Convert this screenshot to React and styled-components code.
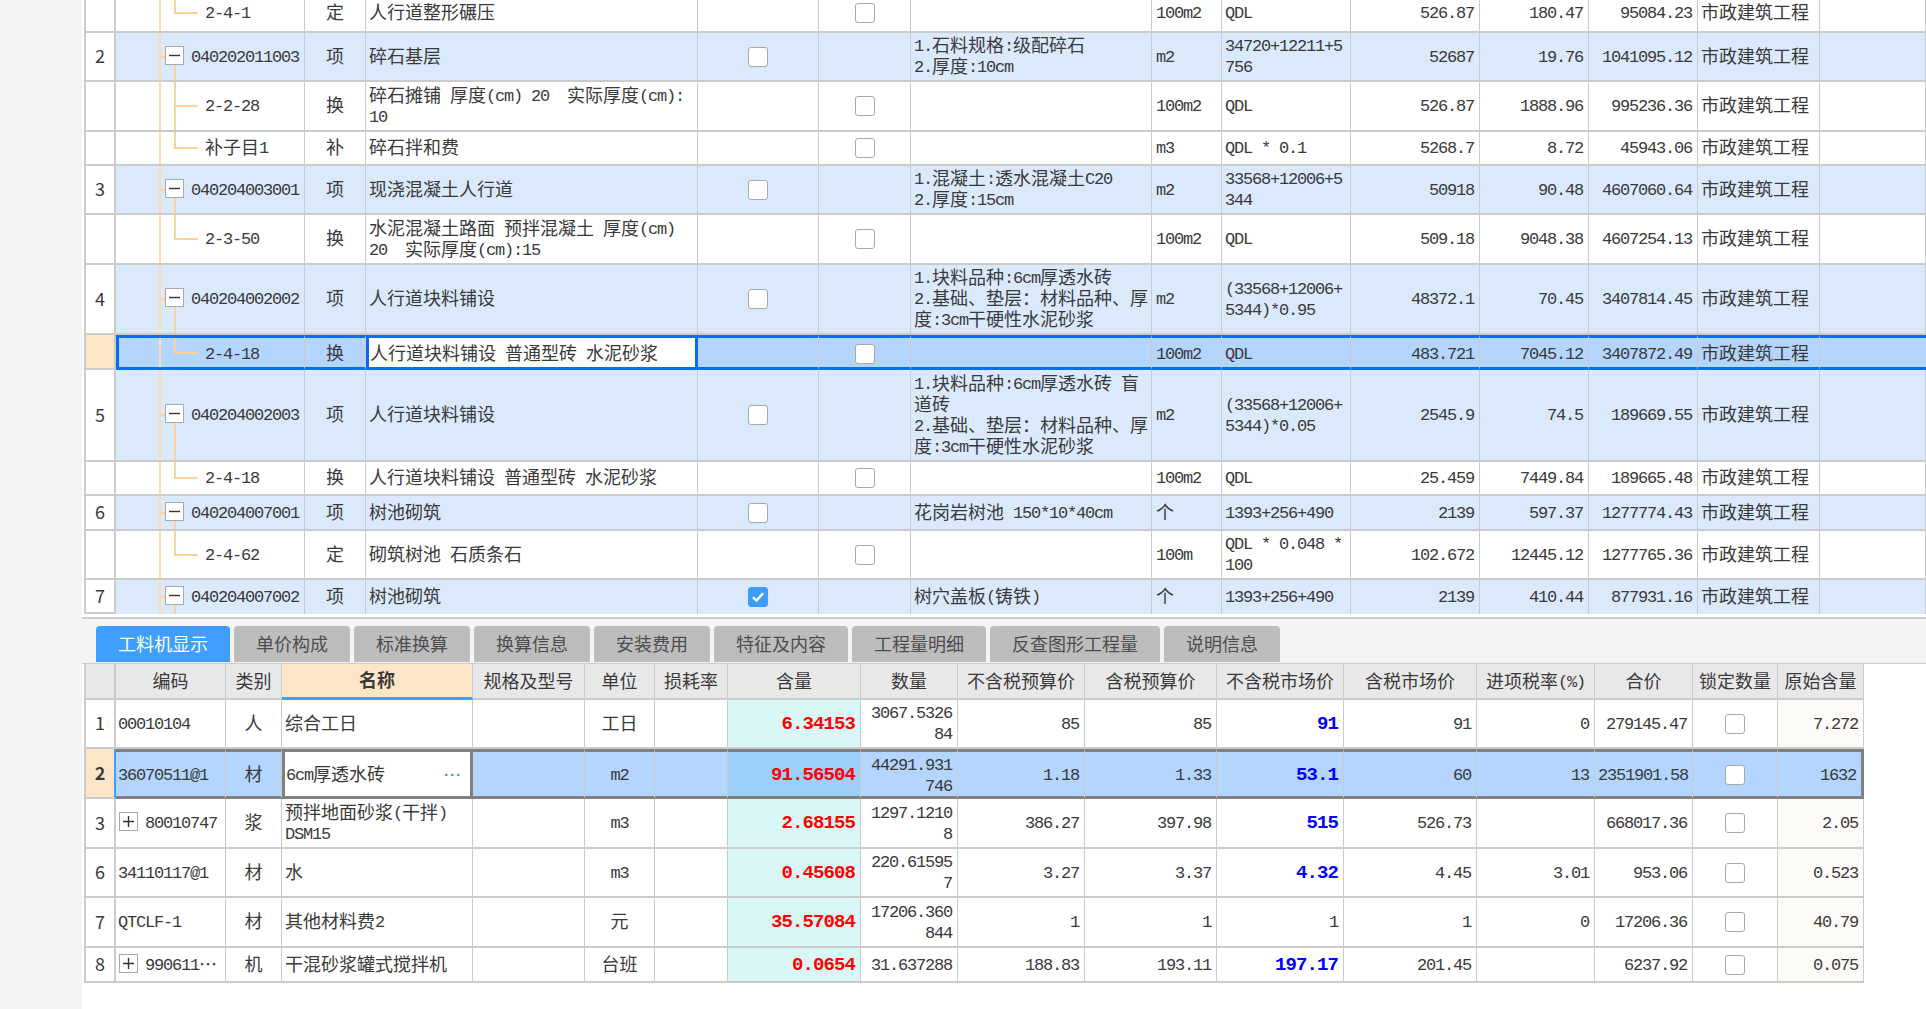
import React from 'react';
import styled, { createGlobalStyle, css } from 'styled-components';

const GlobalStyle = createGlobalStyle`
  html, body { margin: 0; padding: 0; background: #ffffff; }
  body {
    font-family: "Noto Sans CJK SC", "Liberation Mono", monospace;
    font-size: 18px;
    line-height: 21px;
    color: #3a3a3a;
    overflow: hidden;
  }
`;

const LINE = '#cbcbcb';
const TREE = 'linear-gradient(#ffd09a, #ffd09a)';
const TRUNK = 'linear-gradient(#ffdcb0, #ffdcb0)';

const Page = styled.div`
  display: flex;
  width: 1926px;
  height: 1009px;
  overflow: hidden;
`;
const Gutter = styled.div`
  width: 82px;
  flex: none;
  background: #f4f4f4;
`;
const Main = styled.div`
  flex: 1;
  min-width: 0;
  padding-left: 2px;
`;
const BillPane = styled.div`
  height: 614px;
  overflow: hidden;
`;
const Separator = styled.div`
  margin: 3px 0 0 -2px;
  height: 2px;
  background: #cdcdcd;
`;
const TabStrip = styled.div`
  display: flex;
  align-items: flex-end;
  gap: 4px;
  height: 44px;
  margin-left: -2px;
  padding-left: 14px;
  background: #f4f4f4;
  border-bottom: 1px solid ${LINE};
`;
const Tab = styled.div`
  height: 36px;
  padding: 0 22px;
  margin-bottom: 1px;
  line-height: 35px;
  border-radius: 4px 4px 0 0;
  background: ${(p) => (p.$active ? '#409eff' : '#bdbdbd')};
  color: ${(p) => (p.$active ? '#ffffff' : '#4d4d4d')};
`;
const Table = styled.table`
  table-layout: fixed;
  border-collapse: separate;
  border-spacing: 0;
  width: ${(p) => p.$width}px;
  margin-top: ${(p) => p.$offset || 0}px;
`;
const Latin = styled.span`
  vertical-align: 1px;
  font-family: "Liberation Mono", monospace;
  font-size: 17px;
  letter-spacing: -1.2px;
  line-height: 0;
`;
const Cell = styled.td`
  box-sizing: border-box;
  padding: 0 ${(p) => (p.$align === 'right' ? 5 : 3)}px 3px ${(p) => p.$pad ?? 3}px;
  border-right: 1px solid ${LINE};
  border-bottom: 2px solid ${LINE};
  text-align: ${(p) => p.$align || 'left'};
  vertical-align: middle;
  white-space: pre-wrap;
  overflow: hidden;
  background: ${(p) => p.$bg || 'transparent'};
  ${(p) => p.$strong && css`
    font-weight: 700;
    color: ${p.$strong};
    ${Latin} { font-size: 19px; letter-spacing: -0.9px; font-weight: 700; }
  `}
`;
const NumCell = styled(Cell)`
  padding: 0 0 2px;
  text-align: center;
  background: ${(p) => (p.$current ? '#fde6c8' : '#ffffff')};
  border-left: 2px solid ${LINE};
  border-right: 2px solid ${LINE};
  ${(p) => p.$current && css`font-weight: 700;`}
`;
const EditCell = styled(Cell)`
  position: relative;
  background: #ffffff;
`;
// tree guide lines are painted as background layers of the code cell
const TreeCell = styled(Cell)`
  padding-left: 0;
  background-repeat: no-repeat;
  ${(p) => (p.$child
    ? css`
      background-image: ${TRUNK}, ${TREE}, ${TREE};
      background-position: 43px 0, 58px 0, 58px 50%;
      background-size: 2px 100%, 2px ${p.$last ? '50%' : '100%'}, 24px 2px;
    `
    : css`
      background-image: ${TRUNK}, ${TREE}, ${TREE};
      background-position: 43px 0, 58px 100%, 43px 50%;
      background-size: 2px 100%, 2px calc(50% - 8px), 6px 2px;
    `)}
`;
const Row = styled.tr`
  height: ${(p) => p.$h}px;
  background: ${(p) => ({ item: '#dbe9fd', active: '#b3d5fe' }[p.$tone] || '#ffffff')};
  ${(p) => p.$tone === 'active' && css`
    & > td:not(:first-child) {
      border-top: 3px solid ${p.$edge};
      border-bottom: 3px solid ${p.$edge};
      padding-bottom: 1px;
    }
    & > td:nth-child(1) { border-right-color: ${p.$leftEdge}; }
    & > td:nth-child(2) { box-shadow: ${p.$inset ? `inset 3px 0 0 ${p.$edge}` : 'none'}; }
    & > td:last-child { border-right: ${p.$closed ? `3px solid ${p.$edge}` : 'none'}; }
    & > ${EditCell} {
      border-left: 3px solid ${p.$edge};
      border-right: 3px solid ${p.$edge};
      padding-left: 1px;
    }
  `}
  ${(p) => p.$clipped && css`
    & > td:not(:first-child) { border-bottom: none; }
  `}
`;
const HeadRow = styled.tr`
  height: 36px;
`;
const HeadCell = styled.th`
  box-sizing: border-box;
  padding: 0 0 2px;
  font-weight: ${(p) => (p.$active ? 700 : 400)};
  background: ${(p) => (p.$active ? '#fde6c8' : '#e8e8e8')};
  border-right: ${(p) => (p.$first ? 2 : 1)}px solid ${LINE};
  border-bottom: ${(p) => (p.$active ? '3px solid #409eff' : `2px solid ${LINE}`)};
  ${(p) => p.$first && css`border-left: 2px solid ${LINE};`}
`;
const Expander = styled.span`
  flex: none;
  display: inline-flex;
  align-items: center;
  justify-content: center;
  box-sizing: border-box;
  width: 19px;
  height: 19px;
  border: 1px solid #a9a9a9;
  background: #ffffff;
  svg { display: block; }
`;
const CodeRow = styled.div`
  display: flex;
  align-items: center;
  gap: ${(p) => p.$gap}px;
  padding-left: ${(p) => p.$left}px;
`;
const Tick = styled.span`
  display: flex;
  align-items: center;
  justify-content: center;
  box-sizing: border-box;
  width: 20px;
  height: 20px;
  margin: 3px auto 0;
  border: 1px solid ${(p) => (p.$on ? '#3f9cff' : '#a9a9a9')};
  border-radius: 3px;
  background: ${(p) => (p.$on ? '#3f9cff' : '#ffffff')};
`;
const MoreDots = styled.span`
  position: absolute;
  right: 8px;
  top: 50%;
  transform: translateY(-50%);
  font-family: "Liberation Sans", sans-serif;
  font-size: 15px;
  font-weight: 700;
  letter-spacing: 1px;
  color: #3b8fd8;
`;

const Txt = ({ children }) =>
  String(children)
    .split(/([\x00-\x7f]+)/)
    .map((part, i) =>
      !part ? null : /^[\x00-\x7f]/.test(part) ? <Latin key={i}>{part}</Latin> : <span key={i}>{part}</span>
    );

const Check = ({ on }) => (
  <Tick $on={on}>
    {on && (
      <svg width="14" height="12" viewBox="0 0 14 12">
        <path d="M2 6.2 5.5 9.6 12 2.4" fill="none" stroke="#fff" strokeWidth="2.4" />
      </svg>
    )}
  </Tick>
);

const Toggle = ({ plus }) => (
  <Expander>
    <svg width="11" height="11" viewBox="0 0 11 11">
      <path d={plus ? 'M0 5.5h11M5.5 0v11' : 'M0 5.5h11'} stroke="#333" strokeWidth="1.4" />
    </svg>
  </Expander>
);

const Columns = ({ edges }) => (
  <colgroup>
    {edges.slice(1).map((x, i) => (
      <col key={i} style={{ width: x - edges[i] }} />
    ))}
  </colgroup>
);

const billEdges = [84, 116, 305, 366, 698, 819, 911, 1152, 1222, 1351, 1480, 1589, 1698, 1820, 1926];
const FEE = '市政建筑工程';
const BLOCK = '人行道块料铺设';
const PAVE = '人行道块料铺设 普通型砖 水泥砂浆';

const billRows = [
  { h: 38, child: true, last: true, code: '2-4-1', type: '定', name: '人行道整形碾压', unit: '100m2', formula: 'QDL', qty: '526.87', price: '180.47', total: '95084.23' },
  { h: 49, no: '2', code: '040202011003', type: '项', name: '碎石基层', desc: '1.石料规格:级配碎石\n2.厚度:10cm', unit: 'm2', formula: '34720+12211+5\n756', qty: '52687', price: '19.76', total: '1041095.12' },
  { h: 50, child: true, code: '2-2-28', type: '换', name: '碎石摊铺 厚度(cm) 20  实际厚度(cm):\n10', unit: '100m2', formula: 'QDL', qty: '526.87', price: '1888.96', total: '995236.36' },
  { h: 34, child: true, last: true, code: '补子目1', type: '补', name: '碎石拌和费', unit: 'm3', formula: 'QDL * 0.1', qty: '5268.7', price: '8.72', total: '45943.06' },
  { h: 49, no: '3', code: '040204003001', type: '项', name: '现浇混凝土人行道', desc: '1.混凝土:透水混凝土C20\n2.厚度:15cm', unit: 'm2', formula: '33568+12006+5\n344', qty: '50918', price: '90.48', total: '4607060.64' },
  { h: 50, child: true, last: true, code: '2-3-50', type: '换', name: '水泥混凝土路面 预拌混凝土 厚度(cm)\n20  实际厚度(cm):15', unit: '100m2', formula: 'QDL', qty: '509.18', price: '9048.38', total: '4607254.13' },
  { h: 70, no: '4', code: '040204002002', type: '项', name: BLOCK, desc: '1.块料品种:6cm厚透水砖\n2.基础、垫层：材料品种、厚\n度:3cm干硬性水泥砂浆', unit: 'm2', formula: '(33568+12006+\n5344)*0.95', qty: '48372.1', price: '70.45', total: '3407814.45' },
  { h: 35, child: true, last: true, active: true, code: '2-4-18', type: '换', name: PAVE, unit: '100m2', formula: 'QDL', qty: '483.721', price: '7045.12', total: '3407872.49' },
  { h: 92, no: '5', code: '040204002003', type: '项', name: BLOCK, desc: '1.块料品种:6cm厚透水砖 盲\n道砖\n2.基础、垫层：材料品种、厚\n度:3cm干硬性水泥砂浆', unit: 'm2', formula: '(33568+12006+\n5344)*0.05', qty: '2545.9', price: '74.5', total: '189669.55' },
  { h: 34, child: true, last: true, code: '2-4-18', type: '换', name: PAVE, unit: '100m2', formula: 'QDL', qty: '25.459', price: '7449.84', total: '189665.48' },
  { h: 35, no: '6', code: '040204007001', type: '项', name: '树池砌筑', desc: '花岗岩树池 150*10*40cm', unit: '个', formula: '1393+256+490', qty: '2139', price: '597.37', total: '1277774.43' },
  { h: 49, child: true, last: true, code: '2-4-62', type: '定', name: '砌筑树池 石质条石', unit: '100m', formula: 'QDL * 0.048 *\n100', qty: '102.672', price: '12445.12', total: '1277765.36' },
  { h: 34, no: '7', clipped: true, checked: true, code: '040204007002', type: '项', name: '树池砌筑', desc: '树穴盖板(铸铁)', unit: '个', formula: '1393+256+490', qty: '2139', price: '410.44', total: '877931.16' },
];

const BillRow = ({ row }) => {
  const tone = row.active ? 'active' : row.child ? 'plain' : 'item';
  const Name = row.active ? EditCell : Cell;
  return (
    <Row $h={row.h} $tone={tone} $edge="#0a6cf5" $leftEdge={LINE} $inset $clipped={row.clipped}>
      <NumCell $current={row.active}>{row.no}</NumCell>
      <TreeCell $child={row.child} $last={row.last}>
        {row.child ? (
          <CodeRow $left={89} $gap={0}><span><Txt>{row.code}</Txt></span></CodeRow>
        ) : (
          <CodeRow $left={49} $gap={7}><Toggle /><span><Txt>{row.code}</Txt></span></CodeRow>
        )}
      </TreeCell>
      <Cell $align="center">{row.type}</Cell>
      <Name><Txt>{row.name}</Txt></Name>
      <Cell>{!row.child && <Check on={row.checked} />}</Cell>
      <Cell>{row.child && <Check />}</Cell>
      <Cell><Txt>{row.desc || ''}</Txt></Cell>
      <Cell $pad={4}><Txt>{row.unit}</Txt></Cell>
      <Cell><Txt>{row.formula}</Txt></Cell>
      <Cell $align="right"><Txt>{row.qty}</Txt></Cell>
      <Cell $align="right"><Txt>{row.price}</Txt></Cell>
      <Cell $align="right"><Txt>{row.total}</Txt></Cell>
      <Cell>{FEE}</Cell>
      <Cell />
    </Row>
  );
};

const tabs = ['工料机显示', '单价构成', '标准换算', '换算信息', '安装费用', '特征及内容', '工程量明细', '反查图形工程量', '说明信息'];

const materialEdges = [84, 116, 226, 282, 473, 585, 655, 728, 861, 958, 1085, 1217, 1344, 1477, 1595, 1693, 1778, 1864];
const materialHead = ['', '编码', '类别', '名称', '规格及型号', '单位', '损耗率', '含量', '数量', '不含税预算价', '含税预算价', '不含税市场价', '含税市场价', '进项税率(%)', '合价', '锁定数量', '原始含量'];

const materialRows = [
  { h: 49, no: '1', code: '00010104', type: '人', name: '综合工日', unit: '工日', content: '6.34153', qty: '3067.5326\n84', budget: '85', budgetTax: '85', market: '91', marketTax: '91', rate: '0', total: '279145.47', origin: '7.272' },
  { h: 50, no: '2', active: true, code: '36070511@1', type: '材', name: '6cm厚透水砖', unit: 'm2', content: '91.56504', qty: '44291.931\n746', budget: '1.18', budgetTax: '1.33', market: '53.1', marketTax: '60', rate: '13', total: '2351901.58', origin: '1632' },
  { h: 50, no: '3', plus: true, code: '80010747', type: '浆', name: '预拌地面砂浆(干拌)\nDSM15', unit: 'm3', content: '2.68155', qty: '1297.1210\n8', budget: '386.27', budgetTax: '397.98', market: '515', marketTax: '526.73', rate: '', total: '668017.36', origin: '2.05' },
  { h: 49, no: '6', code: '34110117@1', type: '材', name: '水', unit: 'm3', content: '0.45608', qty: '220.61595\n7', budget: '3.27', budgetTax: '3.37', market: '4.32', marketTax: '4.45', rate: '3.01', total: '953.06', origin: '0.523' },
  { h: 50, no: '7', code: 'QTCLF-1', type: '材', name: '其他材料费2', unit: '元', content: '35.57084', qty: '17206.360\n844', budget: '1', budgetTax: '1', market: '1', plainMarket: true, marketTax: '1', rate: '0', total: '17206.36', origin: '40.79' },
  { h: 35, no: '8', plus: true, code: '990611…', type: '机', name: '干混砂浆罐式搅拌机', unit: '台班', content: '0.0654', qty: '31.637288', budget: '188.83', budgetTax: '193.11', market: '197.17', marketTax: '201.45', rate: '', total: '6237.92', origin: '0.075' },
];

const MaterialRow = ({ row }) => {
  const Name = row.active ? EditCell : Cell;
  return (
    <Row $h={row.h} $tone={row.active ? 'active' : 'plain'} $edge="#808080" $leftEdge="#409eff" $closed>
      <NumCell $current={row.active}>{row.no}</NumCell>
      <Cell $pad={row.plus ? 3 : 2}>
        {row.plus ? (
          <CodeRow $left={0} $gap={7}><Toggle plus /><span><Txt>{row.code}</Txt></span></CodeRow>
        ) : (
          <Txt>{row.code}</Txt>
        )}
      </Cell>
      <Cell $align="center">{row.type}</Cell>
      <Name>
        <Txt>{row.name}</Txt>
        {row.active && <MoreDots>···</MoreDots>}
      </Name>
      <Cell />
      <Cell $align="center"><Txt>{row.unit}</Txt></Cell>
      <Cell />
      <Cell $align="right" $strong="#ff0000" $bg={row.active ? '#9bd0fa' : '#d9f7f7'}><Txt>{row.content}</Txt></Cell>
      <Cell $align="right"><Txt>{row.qty}</Txt></Cell>
      <Cell $align="right"><Txt>{row.budget}</Txt></Cell>
      <Cell $align="right"><Txt>{row.budgetTax}</Txt></Cell>
      <Cell $align="right" $strong={row.plainMarket ? undefined : '#0000ff'}><Txt>{row.market}</Txt></Cell>
      <Cell $align="right"><Txt>{row.marketTax}</Txt></Cell>
      <Cell $align="right"><Txt>{row.rate}</Txt></Cell>
      <Cell $align="right"><Txt>{row.total}</Txt></Cell>
      <Cell><Check /></Cell>
      <Cell $align="right" $bg={row.active ? undefined : '#fdfbf7'}><Txt>{row.origin}</Txt></Cell>
    </Row>
  );
};

export default function App() {
  return (
    <>
      <GlobalStyle />
      <Page>
        <Gutter />
        <Main>
          <BillPane>
            <Table $width={1842} $offset={-5}>
              <Columns edges={billEdges} />
              <tbody>
                {billRows.map((row, i) => (
                  <BillRow key={i} row={row} />
                ))}
              </tbody>
            </Table>
          </BillPane>
          <Separator />
          <TabStrip>
            {tabs.map((t, i) => (
              <Tab key={t} $active={i === 0}>{t}</Tab>
            ))}
          </TabStrip>
          <Table $width={1780}>
            <Columns edges={materialEdges} />
            <thead>
              <HeadRow>
                {materialHead.map((h, i) => (
                  <HeadCell key={i} $first={i === 0} $active={h === '名称'}><Txt>{h}</Txt></HeadCell>
                ))}
              </HeadRow>
            </thead>
            <tbody>
              {materialRows.map((row) => (
                <MaterialRow key={row.no} row={row} />
              ))}
            </tbody>
          </Table>
        </Main>
      </Page>
    </>
  );
}
